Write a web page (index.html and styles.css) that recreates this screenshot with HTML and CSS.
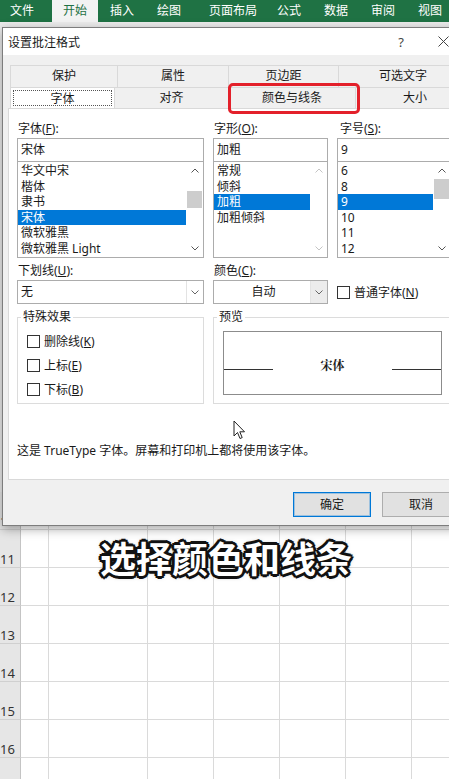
FILE: index.html
```html
<!DOCTYPE html>
<html>
<head>
<meta charset="utf-8">
<link rel="stylesheet" href="styles.css">
</head>
<body>

<div class="ribbon">
  <div class="rtab t-file">文件</div>
  <div class="rtab t-home">开始</div>
  <div class="rtab t-ins">插入</div>
  <div class="rtab t-draw">绘图</div>
  <div class="rtab t-page">页面布局</div>
  <div class="rtab t-form">公式</div>
  <div class="rtab t-data">数据</div>
  <div class="rtab t-rev">审阅</div>
  <div class="rtab t-view">视图</div>
</div>

<div class="sheet">
  <div class="sheet-top"></div>
  <div class="row"><div class="rh">10</div><i></i><i></i><i></i><i></i><i></i><i></i><i></i></div>
  <div class="row"><div class="rh">11</div><i></i><i></i><i></i><i></i><i></i><i></i><i></i></div>
  <div class="row"><div class="rh">12</div><i></i><i></i><i></i><i></i><i></i><i></i><i></i></div>
  <div class="row"><div class="rh">13</div><i></i><i></i><i></i><i></i><i></i><i></i><i></i></div>
  <div class="row"><div class="rh">14</div><i></i><i></i><i></i><i></i><i></i><i></i><i></i></div>
  <div class="row"><div class="rh">15</div><i></i><i></i><i></i><i></i><i></i><i></i><i></i></div>
  <div class="row"><div class="rh">16</div><i></i><i></i><i></i><i></i><i></i><i></i><i></i></div>
  <div class="row"><div class="rh"></div><i></i><i></i><i></i><i></i><i></i><i></i><i></i></div>
</div>

<div class="dialog">
  <div class="titlebar">
    <div class="title">设置批注格式</div>
    <div class="help">?</div>
    <div class="close">
      <svg width="11" height="11" viewBox="0 0 11 11"><path d="M0.5 0.5 L10.5 10.5 M10.5 0.5 L0.5 10.5" stroke="#444" stroke-width="1" fill="none"/></svg>
    </div>
  </div>

  <div class="dlg-body">
    <div class="tabs">
      <div class="tab-row back">
        <div class="tab w108">保护</div>
        <div class="tab w112">属性</div>
        <div class="tab w111">页边距</div>
        <div class="tab w130">可选文字</div>
      </div>
      <div class="tab-row front">
        <div class="tab on w105"><div class="focus">字体</div></div>
        <div class="tab w115">对齐</div>
        <div class="tab w128">颜色与线条</div>
        <div class="tab w120">大小</div>
      </div>
    </div>

    <div class="panel">
      <div class="fontgrid">
        <div class="col">
          <div class="lbl">字体(<u>F</u>):</div>
          <div class="field">宋体</div>
          <div class="list">
            <div class="items">
              <div class="item">华文中宋</div>
              <div class="item">楷体</div>
              <div class="item">隶书</div>
              <div class="item sel">宋体</div>
              <div class="item">微软雅黑</div>
              <div class="item">微软雅黑 Light</div>
            </div>
            <div class="sb">
              <div class="sb-btn"><svg width="8" height="5" viewBox="0 0 8 5"><path d="M0.5 4.5 L4 1 L7.5 4.5" fill="none" stroke="#555"/></svg></div>
              <div class="sb-track"><div class="thumb thumb-a"></div></div>
              <div class="sb-btn"><svg width="8" height="5" viewBox="0 0 8 5"><path d="M0.5 0.5 L4 4 L7.5 0.5" fill="none" stroke="#555"/></svg></div>
            </div>
          </div>
        </div>

        <div class="col">
          <div class="lbl">字形(<u>O</u>):</div>
          <div class="field">加粗</div>
          <div class="list">
            <div class="items">
              <div class="item">常规</div>
              <div class="item">倾斜</div>
              <div class="item sel">加粗</div>
              <div class="item">加粗倾斜</div>
            </div>
            <div class="sb">
              <div class="sb-btn"><svg width="8" height="5" viewBox="0 0 8 5"><path d="M0.5 4.5 L4 1 L7.5 4.5" fill="none" stroke="#c4c4c4"/></svg></div>
              <div class="sb-track"></div>
              <div class="sb-btn"><svg width="8" height="5" viewBox="0 0 8 5"><path d="M0.5 0.5 L4 4 L7.5 0.5" fill="none" stroke="#c4c4c4"/></svg></div>
            </div>
          </div>
        </div>

        <div class="col">
          <div class="lbl lbl-r">字号(<u>S</u>):</div>
          <div class="field">9</div>
          <div class="list">
            <div class="items">
              <div class="item">6</div>
              <div class="item">8</div>
              <div class="item sel">9</div>
              <div class="item">10</div>
              <div class="item">11</div>
              <div class="item">12</div>
            </div>
            <div class="sb">
              <div class="sb-btn"><svg width="8" height="5" viewBox="0 0 8 5"><path d="M0.5 4.5 L4 1 L7.5 4.5" fill="none" stroke="#555"/></svg></div>
              <div class="sb-track"><div class="thumb thumb-b"></div></div>
              <div class="sb-btn"><svg width="8" height="5" viewBox="0 0 8 5"><path d="M0.5 0.5 L4 4 L7.5 0.5" fill="none" stroke="#555"/></svg></div>
            </div>
          </div>
        </div>
      </div>

      <div class="optgrid">
        <div class="col">
          <div class="lbl">下划线(<u>U</u>):</div>
          <div class="drop">
            <div class="drop-text">无</div>
            <div class="drop-btn"><svg width="8" height="5" viewBox="0 0 8 5"><path d="M0.5 0.5 L4 4 L7.5 0.5" fill="none" stroke="#666"/></svg></div>
          </div>
        </div>
        <div class="col">
          <div class="lbl">颜色(<u>C</u>):</div>
          <div class="drop color">
            <div class="drop-text">自动</div>
            <div class="drop-btn"><svg width="8" height="5" viewBox="0 0 8 5"><path d="M0.5 0.5 L4 4 L7.5 0.5" fill="none" stroke="#666"/></svg></div>
          </div>
        </div>
        <div class="col">
          <div class="lbl"></div>
          <div class="chk-row"><span class="box"></span><span>普通字体(<u>N</u>)</span></div>
        </div>
      </div>

      <div class="groups">
        <fieldset class="group">
          <legend>特殊效果</legend>
          <div class="checks">
            <div class="chk-row"><span class="box"></span><span>删除线(<u>K</u>)</span></div>
            <div class="chk-row"><span class="box"></span><span>上标(<u>E</u>)</span></div>
            <div class="chk-row"><span class="box"></span><span>下标(<u>B</u>)</span></div>
          </div>
        </fieldset>
        <fieldset class="group">
          <legend>预览</legend>
          <div class="preview">
            <div class="pline"></div>
            <div class="ptext">宋体</div>
            <div class="pline"></div>
          </div>
        </fieldset>
      </div>

      <div class="note">这是 TrueType 字体。屏幕和打印机上都将使用该字体。</div>
    </div>

    <div class="btns">
      <div class="btn def">确定</div>
      <div class="btn">取消</div>
    </div>
  </div>

  <div class="mark"></div>

  <svg class="cursor" width="13" height="20" viewBox="0 0 13 20">
    <path d="M1 1 L1 16 L4.5 12.5 L7 18.5 L9.2 17.6 L6.8 11.8 L11.5 11.8 Z" fill="#fff" stroke="#222" stroke-width="1" stroke-linejoin="round"/>
  </svg>
</div>

<div class="caption">选择颜色和线条</div>

</body>
</html>
```

FILE: styles.css
```css
* {
  box-sizing: border-box;
}

body {
  margin: 0;
  width: 449px;
  height: 779px;
  overflow: hidden;
  position: relative;
  background: #fff;
  color: #1a1a1a;
  font-family: "Noto Sans", "Noto Sans CJK SC", sans-serif;
  font-size: 12px;
}

u {
  text-underline-offset: 1px;
}

/* ribbon */
.ribbon {
  display: flex;
  height: 22px;
  background: #1f7244;
  color: #fff;
  line-height: 22px;
}

.rtab {
  flex: none;
  text-align: center;
}

.t-file { width: 44px; margin-right: 8px; }
.t-home { width: 46px; background: #f3f3f3; color: #1f7244; }
.t-ins { width: 48px; }
.t-draw { width: 46px; }
.t-page { width: 82px; }
.t-form { width: 30px; }
.t-data { width: 64px; }
.t-rev { width: 30px; }
.t-view { width: 64px; }

/* sheet */
.sheet-top {
  height: 470px;
  background: #ececec;
}

.row {
  display: grid;
  grid-template-columns: 21px 28px 99px 66px 66px 66px 66px 66px;
  height: 38px;
}

.row > i {
  border-right: 1px solid #dadada;
  border-bottom: 1px solid #dadada;
}

.rh {
  display: flex;
  align-items: flex-end;
  padding: 0 0 1px 0;
  background: #e6e6e6;
  border-right: 1px solid #c4c4c4;
  border-bottom: 1px solid #d0d0d0;
  color: #333;
  font-size: 13px;
  line-height: 14px;
}

/* dialog */
.dialog {
  position: absolute;
  left: 2px;
  top: 27px;
  width: 470px;
  height: 499px;
  background: #f0f0f0;
  border: 1px solid #7d7d7d;
  box-shadow: 0 3px 10px rgba(0,0,0,0.35);
}

.titlebar {
  display: flex;
  align-items: center;
  height: 27px;
  padding: 0 18px 0 5px;
  background: #fff;
}

.title {
  flex: 1;
}

.help {
  width: 20px;
  margin-right: 22px;
  text-align: center;
  color: #444;
  font-size: 13px;
}

.close {
  width: 20px;
  display: flex;
  justify-content: center;
}

.dlg-body {
  padding: 10px 0 0 5px;
}

.tabs {
  margin-left: 2px;
}

.tab-row {
  display: flex;
  height: 22px;
}

.tab-row.front {
  height: 21px;
}

.tab {
  flex: none;
  margin-right: -1px;
  border: 1px solid #d9d9d9;
  border-bottom: none;
  background: #f0f0f0;
  text-align: center;
  line-height: 20px;
}

.tab.on {
  padding: 2px;
  background: #fff;
  line-height: 15px;
}

.focus {
  height: 100%;
  border: 1px dotted #555;
}

.w105 { width: 105px; }
.w108 { width: 108px; }
.w111 { width: 111px; }
.w112 { width: 112px; }
.w115 { width: 115px; }
.w120 { width: 120px; }
.w128 { width: 128px; }
.w130 { width: 130px; }

.panel {
  height: 372px;
  padding: 12px 0 0 8px;
  background: #fff;
  border: 1px solid #d9d9d9;
}

.fontgrid,
.optgrid {
  display: grid;
  grid-template-columns: 187px 115px 114px;
  column-gap: 9px;
}

.optgrid {
  margin-top: 5px;
}

.lbl {
  height: 16px;
  margin-bottom: 1px;
  padding-left: 1px;
  line-height: 16px;
}

.lbl-r {
  padding-left: 3px;
}

.field {
  height: 24px;
  padding-left: 3px;
  border: 1px solid #acacac;
  line-height: 22px;
}

.list {
  display: flex;
  height: 96px;
  border: 1px solid #acacac;
  border-top: none;
}

.items {
  flex: 1;
  padding-top: 1px;
}

.item {
  height: 15.6px;
  padding-left: 3px;
  line-height: 15.6px;
  white-space: nowrap;
}

.item.sel {
  background: #0078d7;
  color: #fff;
}

.sb {
  width: 17px;
  display: flex;
  flex-direction: column;
}

.sb-btn {
  height: 17px;
  display: flex;
  align-items: center;
  justify-content: center;
}

.sb-track {
  flex: 1;
}

.thumb {
  margin: 0 1px;
  background: #cdcdcd;
}

.thumb-a {
  margin-top: 12px;
  height: 17px;
}

.thumb-b {
  height: 20px;
}

.drop {
  display: flex;
  height: 24px;
  border: 1px solid #acacac;
}

.drop-text {
  flex: 1;
  padding-left: 3px;
  line-height: 22px;
}

.drop-btn {
  width: 17px;
  display: flex;
  align-items: center;
  justify-content: center;
  border-left: 1px solid #e3e3e3;
}

.drop.color .drop-text {
  text-align: center;
}

.drop.color .drop-btn {
  background: #ececec;
}

.chk-row {
  display: flex;
  align-items: center;
  gap: 4px;
  height: 24px;
  white-space: nowrap;
}

.box {
  flex: none;
  width: 13px;
  height: 13px;
  border: 1px solid #333;
  background: #fff;
}

.groups {
  display: grid;
  grid-template-columns: 187px 244px;
  column-gap: 9px;
  margin-top: 6px;
}

.group {
  height: 94px;
  margin: 0;
  padding: 0;
  min-width: 0;
  border: 1px solid #dcdcdc;
}

.group legend {
  margin-left: 3px;
  padding: 0 2px;
  line-height: 14px;
}

.checks {
  padding: 5px 0 0 9px;
}

.preview {
  display: flex;
  align-items: baseline;
  justify-content: space-between;
  width: 219px;
  height: 64px;
  margin: 7px 0 0 9px;
  padding-top: 26px;
  border: 1px solid #8c8c8c;
}

.pline {
  width: 49px;
  height: 1px;
  background: #333;
}

.ptext {
  font-family: "Noto Serif CJK SC", "Noto Sans CJK SC", serif;
  font-weight: bold;
  line-height: 14px;
}

.note {
  margin-top: 40px;
  line-height: 14px;
}

.btns {
  display: flex;
  justify-content: flex-end;
  gap: 11px;
  margin-top: 12px;
  padding-right: 11px;
}

.btn {
  width: 78px;
  height: 25px;
  border: 1px solid #adadad;
  background: #e1e1e1;
  text-align: center;
  line-height: 23px;
}

.btn.def {
  border-color: #0078d7;
  box-shadow: inset 0 0 0 1px rgba(0,120,215,0.3);
}

/* overlays */
.mark {
  position: absolute;
  left: 225px;
  top: 55px;
  width: 132px;
  height: 31px;
  border: 3px solid #e3202a;
  border-radius: 5px;
}

.cursor {
  position: absolute;
  left: 230px;
  top: 392px;
}

.caption {
  position: absolute;
  left: 100px;
  top: 535px;
  color: #fff;
  font-family: "Noto Sans CJK SC", sans-serif;
  font-size: 36px;
  font-weight: bold;
  line-height: 44px;
  white-space: nowrap;
  text-shadow:
    2px 0 0 #111, -2px 0 0 #111, 0 2px 0 #111, 0 -2px 0 #111,
    2px 2px 0 #111, -2px -2px 0 #111, 2px -2px 0 #111, -2px 2px 0 #111,
    3px 0 0 #111, -3px 0 0 #111, 0 3px 0 #111, 0 -3px 0 #111,
    0 0 5px #666;
}
```
